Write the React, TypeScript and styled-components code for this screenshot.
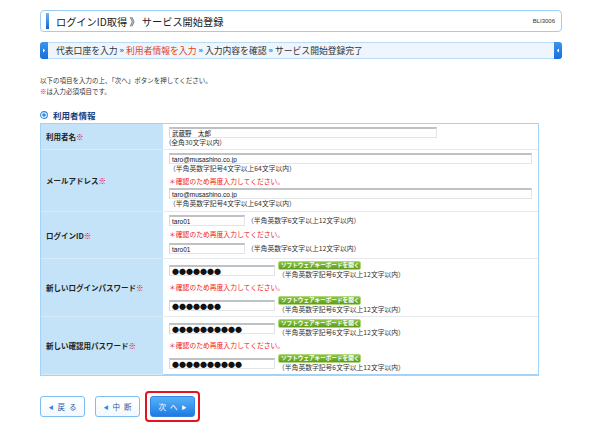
import React from 'react';
import styled, { createGlobalStyle } from 'styled-components';

const GlobalStyle = createGlobalStyle`
  html, body {
    margin: 0;
    padding: 0;
    background: #ffffff;
  }
  body {
    font-family: "Noto Sans CJK JP", "Noto Sans", sans-serif;
    color: #333333;
  }
`;

const Page = styled.div`
  width: 522px;
  padding: 10px 0 0 40px;
`;

const TitleBox = styled.div`
  height: 20px;
  display: flex;
  align-items: center;
  padding: 0 6px 0 5px;
  border: 1px solid #9ccdf5;
  border-radius: 4px;
`;

const TitleBar = styled.div`
  width: 3px;
  height: 16px;
  margin-right: 7px;
  background: linear-gradient(#6db6f4, #1466cf);
`;

const Title = styled.div`
  font-size: 10.2px;
  color: #222222;
  white-space: nowrap;
`;

const ScreenId = styled.div`
  margin-left: auto;
  font-family: "Liberation Sans", sans-serif;
  font-size: 6px;
  color: #333333;
`;

const StepBar = styled.div`
  margin-top: 10px;
  height: 17px;
  display: flex;
`;

const StepCap = styled.div<{ side: 'left' | 'right' }>`
  width: 8px;
  display: flex;
  align-items: center;
  justify-content: center;
  background: linear-gradient(#3b95ee, #1570dc);
  border-radius: ${(p) => (p.side === 'left' ? '3px 0 0 3px' : '0 3px 3px 0')};
`;

const StepBody = styled.div`
  flex: 1;
  display: flex;
  align-items: center;
  padding-left: 8px;
  background: #eef5fc;
  border-top: 1px solid #b9dbf6;
  border-bottom: 1px solid #b9dbf6;
  font-size: 8.8px;
  color: #333333;
  white-space: nowrap;
`;

const Step = styled.span<{ current?: boolean }>`
  color: ${(p) => (p.current ? '#e2421f' : '#333333')};
`;

const StepSep = styled.span`
  color: #2b8ae2;
  font-family: "Liberation Sans", sans-serif;
  font-weight: bold;
  font-size: 8px;
  margin: 0 2px;
`;

const Intro = styled.div`
  margin-top: 16px;
  font-size: 6.5px;
  line-height: 11px;
  color: #333333;
`;

const Req = styled.span`
  color: #e60012;
`;

const SectionHead = styled.div`
  margin-top: 13px;
  height: 10px;
  display: flex;
  align-items: center;
  gap: 5px;
  font-size: 8.5px;
  font-weight: bold;
  color: #1d3c78;
`;

const FormTable = styled.div`
  margin-top: 3px;
  width: 499px;
  border: 1px solid #a5d3f7;
  border-bottom-width: 2px;
  box-sizing: border-box;
`;

const Row = styled.div`
  display: flex;
  border-bottom: 1px solid #e6e9ec;
  &:last-child {
    border-bottom: none;
  }
`;

const Label = styled.div`
  width: 122px;
  flex-shrink: 0;
  display: flex;
  align-items: center;
  padding-left: 5px;
  box-sizing: border-box;
  background: #c4e3f8;
  font-size: 7.5px;
  font-weight: bold;
  color: #222222;
  border-bottom: 1px solid #d6ecfb;
  margin-bottom: -1px;
`;

const Field = styled.div<{ pt: number; pb: number }>`
  flex: 1;
  padding: ${(p) => `${p.pt}px 6px ${p.pb}px`};
  display: flex;
  flex-direction: column;
  align-items: flex-start;
`;

const TextInput = styled.input<{ w: number; big?: boolean }>`
  width: ${(p) => p.w}px;
  height: 11px;
  box-sizing: border-box;
  margin: 0;
  padding: 0 2px;
  border: 1px solid #e2e4e6;
  border-top: 2px solid #bfc2c5;
  border-left-color: #d4d6d8;
  background: #ffffff;
  font-family: ${(p) => (p.big ? '"Noto Sans CJK JP", sans-serif' : '"Liberation Sans", "Noto Sans CJK JP", sans-serif')};
  font-size: ${(p) => (p.big ? '7px' : '6.5px')};
  line-height: 9px;
  color: #111111;
  outline: none;
`;

const Hint = styled.div`
  font-size: 6.8px;
  line-height: 9px;
  color: #333333;
  white-space: nowrap;
`;

const Notice = styled.div<{ mt: number; mb: number }>`
  margin: ${(p) => `${p.mt}px 0 ${p.mb}px`};
  font-size: 6.8px;
  line-height: 10px;
  color: #f01818;
  white-space: nowrap;
`;

const InlineLine = styled.div`
  display: flex;
  align-items: center;
  gap: 2px;
`;

const PassLine = styled.div`
  display: flex;
  align-items: center;
  gap: 3px;
`;

const KeyboardStack = styled.div`
  display: flex;
  flex-direction: column;
  align-items: flex-start;
`;

const KeyboardButton = styled.button`
  height: 9px;
  width: 83px;
  margin: 0;
  padding: 0 0 0 2px;
  box-sizing: border-box;
  border: 1px solid #b0d77a;
  border-radius: 2px;
  background: linear-gradient(#8cc443, #5e9c1f);
  color: #ffffff;
  font-family: "Noto Sans CJK JP", sans-serif;
  font-size: 5.6px;
  font-weight: bold;
  line-height: 7px;
  text-align: left;
  white-space: nowrap;
`;

const Buttons = styled.div`
  margin-top: 15px;
  display: flex;
  align-items: center;
  gap: 10px;
`;

const NavButton = styled.button<{ primary?: boolean }>`
  width: 45px;
  height: 21px;
  margin: 0;
  padding: 0;
  box-sizing: border-box;
  border: 1px solid ${(p) => (p.primary ? '#2f86e4' : '#7cbef2')};
  border-radius: 3px;
  background: ${(p) => (p.primary ? 'linear-gradient(#58b2f7, #1d7be2)' : 'linear-gradient(#ffffff, #f3f8fd)')};
  color: ${(p) => (p.primary ? '#ffffff' : '#2a5aa0')};
  font-family: "Noto Sans CJK JP", sans-serif;
  font-size: 7.5px;
  display: flex;
  align-items: center;
  justify-content: center;
  gap: 4px;
`;

const ButtonText = styled.span`
  letter-spacing: 4px;
  margin-right: -4px;
`;

const Arrow = styled.span<{ light?: boolean }>`
  font-size: 5px;
  color: ${(p) => (p.light ? '#ffffff' : '#2c86e6')};
`;

const Highlight = styled.div`
  margin-left: -5px;
  padding: 3px;
  border: 2px solid #e8121e;
  border-radius: 4px;
`;

const RadioIcon = () => (
  <svg width="8" height="8" viewBox="0 0 8 8">
    <circle cx="4" cy="4" r="3.4" fill="#ffffff" stroke="#2a86e4" strokeWidth="1.1" />
    <circle cx="4" cy="4" r="1.8" fill="#2a86e4" />
  </svg>
);

const CapArrow = ({ dir }: { dir: 'right' | 'left' }) => (
  <svg width="4" height="5" viewBox="0 0 4 5">
    {dir === 'right' ? <polygon points="1,0.5 3.2,2.5 1,4.5" fill="#ffffff" /> : <polygon points="3,0.5 0.8,2.5 3,4.5" fill="#ffffff" />}
  </svg>
);

const MustMark = () => <Req>※</Req>;

const confirmText = '＊確認のため再度入力してください。';
const passHint = '（半角英数字記号6文字以上12文字以内）';

const PasswordPair = ({ dots }: { dots: string }) => (
  <PassLine>
    <TextInput w={106} big readOnly value={dots} />
    <KeyboardStack>
      <KeyboardButton>ソフトウェアキーボードを開く</KeyboardButton>
      <Hint>{passHint}</Hint>
    </KeyboardStack>
  </PassLine>
);

const App = () => {
  return (
    <Page>
      <GlobalStyle />
      <TitleBox>
        <TitleBar />
        <Title>ログインID取得 》 サービス開始登録</Title>
        <ScreenId>BLI3006</ScreenId>
      </TitleBox>

      <StepBar>
        <StepCap side="left">
          <CapArrow dir="right" />
        </StepCap>
        <StepBody>
          <Step>代表口座を入力</Step>
          <StepSep>»</StepSep>
          <Step current>利用者情報を入力</Step>
          <StepSep>»</StepSep>
          <Step>入力内容を確認</Step>
          <StepSep>»</StepSep>
          <Step>サービス開始登録完了</Step>
        </StepBody>
        <StepCap side="right">
          <CapArrow dir="left" />
        </StepCap>
      </StepBar>

      <Intro>
        以下の項目を入力の上、「次へ」ボタンを押してください。
        <br />
        <MustMark />は入力必須項目です。
      </Intro>

      <SectionHead>
        <RadioIcon />
        利用者情報
      </SectionHead>

      <FormTable>
        <Row>
          <Label>
            利用者名<MustMark />
          </Label>
          <Field pt={3} pb={2}>
            <TextInput w={268} readOnly value="武蔵野　太郎" />
            <Hint>(全角30文字以内)</Hint>
          </Field>
        </Row>

        <Row>
          <Label>
            メールアドレス<MustMark />
          </Label>
          <Field pt={3} pb={3}>
            <TextInput w={363} readOnly value="taro@musashino.co.jp" />
            <Hint>（半角英数字記号4文字以上64文字以内）</Hint>
            <Notice mt={3} mb={2}>{confirmText}</Notice>
            <TextInput w={363} readOnly value="taro@musashino.co.jp" />
            <Hint>（半角英数字記号4文字以上64文字以内）</Hint>
          </Field>
        </Row>

        <Row>
          <Label>
            ログインID<MustMark />
          </Label>
          <Field pt={3} pb={4}>
            <InlineLine>
              <TextInput w={76} readOnly value="taro01" />
              <Hint>（半角英数字6文字以上12文字以内）</Hint>
            </InlineLine>
            <Notice mt={3} mb={4}>{confirmText}</Notice>
            <InlineLine>
              <TextInput w={76} readOnly value="taro01" />
              <Hint>（半角英数字6文字以上12文字以内）</Hint>
            </InlineLine>
          </Field>
        </Row>

        <Row>
          <Label>
            新しいログインパスワード<MustMark />
          </Label>
          <Field pt={2} pb={2}>
            <PasswordPair dots="●●●●●●●" />
            <Notice mt={3} mb={4}>{confirmText}</Notice>
            <PasswordPair dots="●●●●●●●" />
          </Field>
        </Row>

        <Row>
          <Label>
            新しい確認用パスワード<MustMark />
          </Label>
          <Field pt={2} pb={2}>
            <PasswordPair dots="●●●●●●●●●●" />
            <Notice mt={3} mb={4}>{confirmText}</Notice>
            <PasswordPair dots="●●●●●●●●●●" />
          </Field>
        </Row>
      </FormTable>

      <Buttons>
        <NavButton>
          <Arrow>◀</Arrow>
          <ButtonText>戻る</ButtonText>
        </NavButton>
        <NavButton>
          <Arrow>◀</Arrow>
          <ButtonText>中断</ButtonText>
        </NavButton>
        <Highlight>
          <NavButton primary>
            <ButtonText>次へ</ButtonText>
            <Arrow light>▶</Arrow>
          </NavButton>
        </Highlight>
      </Buttons>
    </Page>
  );
};

export default App;
